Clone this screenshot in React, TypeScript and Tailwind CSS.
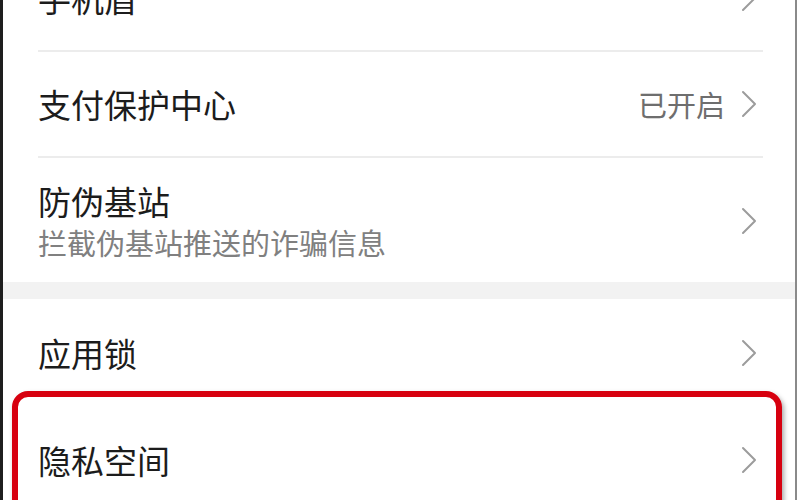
import React from 'react';

const font = { fontFamily: '"Noto Sans CJK SC", "Noto Sans", sans-serif' };

const Chevron = () => (
  <svg width="16" height="28" viewBox="0 0 16 28" className="shrink-0">
    <polyline points="2,2 14,14 2,26" fill="none" stroke="#9c9c9c" strokeWidth="2" strokeLinecap="round" strokeLinejoin="round" />
  </svg>
);

type RowProps = {
  title: string;
  subtitle?: string;
  value?: string;
  divider?: boolean;
  className?: string;
};

const Row = ({ title, subtitle, value, divider = true, className = '' }: RowProps) => (
  <div className={`ml-[35px] mr-[32px] flex items-center justify-between ${divider ? 'border-b-2 border-[#ececec]' : ''} ${className}`}>
    <div className="flex flex-col">
      <span className="text-[33px] leading-[42px] text-[#1c1c1c]">{title}</span>
      {subtitle && <span className="text-[29px] leading-[40px] text-[#808080]">{subtitle}</span>}
    </div>
    <div className="flex items-center gap-[16px] mr-[6px]">
      {value && <span className="text-[29px] leading-[38px] text-[#6e6e6e]">{value}</span>}
      <Chevron />
    </div>
  </div>
);

export default function App() {
  return (
    <div className="relative h-[500px] w-[800px] overflow-hidden bg-white" style={font}>
      <div className="h-full w-[797px] border-l-[3px] border-r-2 border-l-[#1e1e1e] border-r-[#8a8a8a] bg-white flex flex-col">
        <Row title="手机盾" className="h-[106px] mt-[-54px] shrink-0" />
        <Row title="支付保护中心" value="已开启" className="h-[106px] shrink-0" />
        <Row title="防伪基站" subtitle="拦截伪基站推送的诈骗信息" divider={false} className="h-[124px] shrink-0 pt-[2px]" />
        <div className="h-[17px] shrink-0 bg-[#f2f2f2]" />
        <Row title="应用锁" divider={false} className="h-[108px] shrink-0" />
        <Row title="隐私空间" divider={false} className="h-[106px] shrink-0" />
      </div>
      {/* red highlight drawn over the list */}
      <div className="absolute left-[12px] top-[391px] h-[200px] w-[770px] rounded-[16px] border-[6px] border-[#d7000f] shadow-[2px_3px_5px_rgba(0,0,0,0.35)]" />
    </div>
  );
}
